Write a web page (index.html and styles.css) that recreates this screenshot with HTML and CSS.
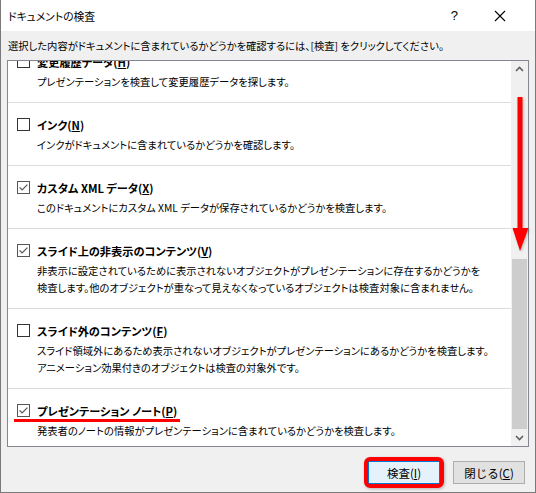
FILE: index.html
```html
<!DOCTYPE html>
<html lang="ja">
<head>
<meta charset="UTF-8">
<title>ドキュメントの検査</title>
<link rel="stylesheet" href="styles.css">
</head>
<body>

<div class="window">
    <div class="titlebar">
        <span class="title">ドキュメントの検査</span>
        <span class="help">?</span>
        <svg class="close" width="12" height="12" viewBox="0 0 12 12">
            <path d="M1 1 L11 11 M11 1 L1 11" stroke="#000" stroke-width="1.1" fill="none"/>
        </svg>
    </div>

    <div class="body">
        <p class="intro">選択した内容がドキュメントに含まれているかどうかを確認するには、[検査] をクリックしてください。</p>

        <div class="listbox">
            <div class="list">
                <div class="item first">
                    <div class="head">
                        <svg class="check" width="13" height="13" viewBox="0 0 13 13"><rect x="0.5" y="0.5" width="12" height="12" fill="#fff" stroke="#333"/></svg>
                        <span>変更履歴データ(<u>H</u>)</span>
                    </div>
                    <p class="desc">プレゼンテーションを検査して変更履歴データを探します。</p>
                </div>
                <div class="item">
                    <div class="head">
                        <svg class="check" width="13" height="13" viewBox="0 0 13 13"><rect x="0.5" y="0.5" width="12" height="12" fill="#fff" stroke="#333"/></svg>
                        <span>インク(<u>N</u>)</span>
                    </div>
                    <p class="desc">インクがドキュメントに含まれているかどうかを確認します。</p>
                </div>
                <div class="item">
                    <div class="head">
                        <svg class="check" width="13" height="13" viewBox="0 0 13 13"><rect x="0.5" y="0.5" width="12" height="12" fill="#fff" stroke="#555"/><path d="M2.6 6.4 L5.1 9 L10.4 3.6" stroke="#555" stroke-width="1.2" fill="none"/></svg>
                        <span>カスタム XML データ(<u>X</u>)</span>
                    </div>
                    <p class="desc">このドキュメントにカスタム XML データが保存されているかどうかを検査します。</p>
                </div>
                <div class="item">
                    <div class="head">
                        <svg class="check" width="13" height="13" viewBox="0 0 13 13"><rect x="0.5" y="0.5" width="12" height="12" fill="#fff" stroke="#555"/><path d="M2.6 6.4 L5.1 9 L10.4 3.6" stroke="#555" stroke-width="1.2" fill="none"/></svg>
                        <span>スライド上の非表示のコンテンツ(<u>V</u>)</span>
                    </div>
                    <p class="desc">非表示に設定されているために表示されないオブジェクトがプレゼンテーションに存在するかどうかを<br>検査します。他のオブジェクトが重なって見えなくなっているオブジェクトは検査対象に含まれません。</p>
                </div>
                <div class="item">
                    <div class="head">
                        <svg class="check" width="13" height="13" viewBox="0 0 13 13"><rect x="0.5" y="0.5" width="12" height="12" fill="#fff" stroke="#333"/></svg>
                        <span>スライド外のコンテンツ(<u>F</u>)</span>
                    </div>
                    <p class="desc">スライド領域外にあるため表示されないオブジェクトがプレゼンテーションにあるかどうかを検査します。<br>アニメーション効果付きのオブジェクトは検査の対象外です。</p>
                </div>
                <div class="item">
                    <div class="head">
                        <svg class="check" width="13" height="13" viewBox="0 0 13 13"><rect x="0.5" y="0.5" width="12" height="12" fill="#fff" stroke="#555"/><path d="M2.6 6.4 L5.1 9 L10.4 3.6" stroke="#555" stroke-width="1.2" fill="none"/></svg>
                        <span class="marked">プレゼンテーション ノート(<u>P</u>)</span>
                    </div>
                    <p class="desc">発表者のノートの情報がプレゼンテーションに含まれているかどうかを検査します。</p>
                </div>
            </div>

            <div class="scrollbar">
                <svg class="sb-arrow" width="17" height="17" viewBox="0 0 17 17"><path d="M5 10 L8.5 6.5 L12 10" stroke="#606060" stroke-width="1.6" fill="none"/></svg>
                <div class="track">
                    <div class="thumb"></div>
                </div>
                <svg class="sb-arrow" width="17" height="17" viewBox="0 0 17 17"><path d="M5 7 L8.5 10.5 L12 7" stroke="#606060" stroke-width="1.6" fill="none"/></svg>
            </div>
        </div>

        <div class="buttons">
            <button class="btn default">検査(<u>I</u>)</button>
            <button class="btn">閉じる(<u>C</u>)</button>
        </div>
    </div>

    <!-- red arrow drawn over the scrollbar -->
    <svg class="red-arrow" width="30" height="170" viewBox="0 0 30 170">
        <rect x="11.5" y="7" width="5" height="134" fill="#ff0000"/>
        <polygon points="6.5,138 22.5,138 14,161" fill="#ff0000"/>
    </svg>
</div>

</body>
</html>
```

FILE: styles.css
```css
body {
    margin: 0;
    font-family: "Noto Sans CJK JP", "Noto Sans", sans-serif;
    font-size: 10.3px;
    font-feature-settings: "palt";
    color: #000;
}

.window {
    position: relative;
    width: 536px;
    height: 493px;
    box-sizing: border-box;
    border: 1px solid #7a7a7a;
    border-top: none;
    background-color: #f0f0f0;
    display: flex;
    flex-direction: column;
}

.titlebar {
    height: 31px;
    background-color: #fff;
    display: flex;
    align-items: center;
    padding-left: 7px;
    flex-shrink: 0;
}

.title {
    flex: 1;
    font-size: 10.8px;
}

.help {
    font-family: "Liberation Sans", sans-serif;
    font-size: 13px;
    margin-right: 36px;
}

.close {
    margin-right: 29px;
}

.body {
    flex: 1;
    display: flex;
    flex-direction: column;
    padding: 6px 6px 0 6px;
}

.intro {
    margin: 0 0 6px 1px;
    line-height: 17px;
    white-space: nowrap;
}

.listbox {
    height: 387px;
    box-sizing: border-box;
    border: 1px solid #828790;
    background-color: #fff;
    display: flex;
    overflow: hidden;
}

.list {
    flex: 1;
    overflow: hidden;
}

.item {
    padding: 13px 0 12px 9px;
    border-bottom: 1px solid #dcdcdc;
}

.item.first {
    margin-top: -21px;
}

.head {
    display: flex;
    align-items: center;
    gap: 7px;
    height: 17px;
    font-size: 11.2px;
    font-weight: bold;
}

.check {
    flex-shrink: 0;
}

.marked {
    position: relative;
}

.marked::after {
    content: "";
    position: absolute;
    left: -23px;
    right: -3px;
    bottom: -3px;
    height: 3px;
    background-color: #ff0000;
}

.desc {
    margin: 3px 0 0 20px;
    line-height: 17px;
    white-space: nowrap;
}

.scrollbar {
    width: 17px;
    background-color: #f0f0f0;
    display: flex;
    flex-direction: column;
}

.sb-arrow {
    flex-shrink: 0;
}

.track {
    flex: 1;
    display: flex;
    flex-direction: column;
    justify-content: flex-end;
    padding: 0 1px;
}

.thumb {
    height: 170px;
    background-color: #cdcdcd;
}

.buttons {
    display: flex;
    justify-content: flex-end;
    gap: 13px;
    padding: 14px 4px 0 0;
}

.btn {
    position: relative;
    width: 72px;
    height: 23px;
    padding: 0;
    font-family: inherit;
    font-size: 11.5px;
    color: #000;
    background-color: #e1e1e1;
    border: 1px solid #adadad;
}

.btn.default {
    background-color: #e5f1fb;
    border: 1px solid #0078d7;
}

.btn.default::after {
    content: "";
    position: absolute;
    left: -5px;
    right: -5px;
    top: -5px;
    bottom: -5px;
    border: 4px solid #ff0000;
    border-radius: 6px;
    box-shadow: 1px 1px 3px rgba(0, 0, 0, 0.25);
}

.red-arrow {
    position: absolute;
    left: 505px;
    top: 90px;
    filter: drop-shadow(1px 1px 1px rgba(0, 0, 0, 0.25));
}
```
